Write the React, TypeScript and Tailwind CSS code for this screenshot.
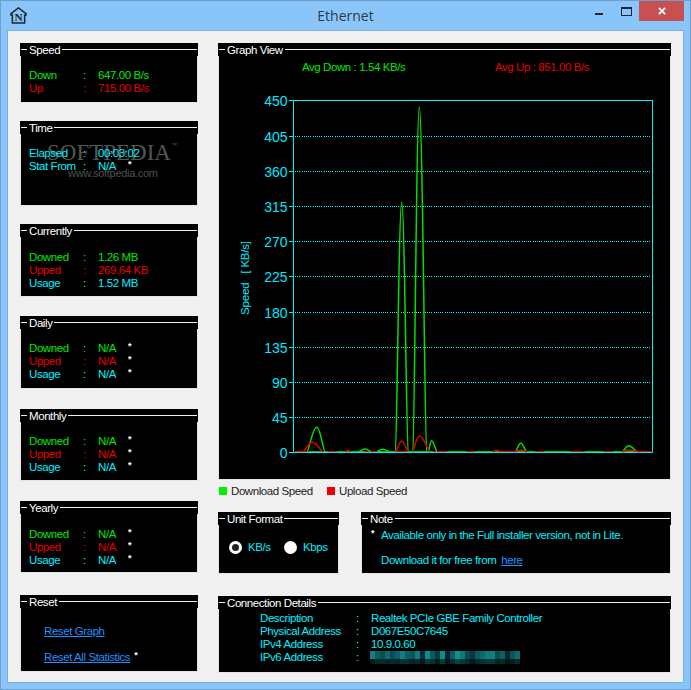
import React from "react";

const G = "text-[#00e800]";
const R = "text-[#e60000]";
const C = "text-[#00f0ff]";

function Panel({ title, className = "", children }: { title: string; className?: string; children?: React.ReactNode }) {
  return (
    <div className={"relative flex flex-col bg-black border-x border-b border-[#e4e4e4] " + className}>
      <div className="-mx-px flex h-[13px] shrink-0 items-center bg-black px-px text-white">
        <span className="h-px w-[6px] bg-[#f0f0f0]" />
        <span className="mt-[2px] px-[2px] leading-[13px]">{title}</span>
        <span className="h-px flex-1 bg-[#f0f0f0]" />
      </div>
      {children}
    </div>
  );
}

function Star() {
  return <span className="mb-[4px] ml-[12px] text-[9px] font-bold leading-[9px] text-white">*</span>;
}

function Row({ label, value, color, star }: { label: string; value: string; color: string; star?: boolean }) {
  return (
    <div className={"flex h-[13px] items-center leading-[13px] " + color}>
      <span className="w-[54px]">{label}</span>
      <span className="w-[15px]">:</span>
      <span>{value}</span>
      {star && <Star />}
    </div>
  );
}

function Stat({ title, className, pad = "pt-[13px]", rows }: { title: string; className: string; pad?: string; rows: [string, string, string, boolean?][] }) {
  return (
    <Panel title={title} className={className}>
      <div className={"relative z-10 pl-[8px] " + pad}>
        {rows.map((r) => (
          <Row key={r[0]} label={r[0]} value={r[1]} color={r[2]} star={r[3]} />
        ))}
      </div>
    </Panel>
  );
}

const BASE = 451.5;
function bump(x0: number, xp: number, x1: number, y: number) {
  const a = xp - x0;
  const b = x1 - xp;
  return `M${x0} ${BASE}C${x0 + a * 0.2} ${BASE} ${xp - a * 0.44} ${y} ${xp} ${y}C${xp + b * 0.44} ${y} ${x1 - b * 0.2} ${BASE} ${x1} ${BASE}`;
}

const greenBumps: [number, number, number, number][] = [
  [307, 316.7, 325, 427.3],
  [359, 365, 371, 449],
  [377, 383, 389, 449.3],
  [395.5, 401.7, 408, 202],
  [413, 419.3, 426.5, 107],
  [428.5, 431.3, 437, 440.7],
  [515.5, 520.7, 526.5, 443.3],
  [622.5, 628.7, 637, 445.7],
];
const redBumps: [number, number, number, number][] = [
  [303, 312.3, 323, 442.3],
  [395.5, 401.7, 408, 441],
  [412.5, 419.3, 430, 436],
  [514, 520.5, 527, 450],
  [622, 629, 640, 450],
  [345, 348, 351, 450.5],
  [493, 497, 501, 450.6],
];

const ticks = [450, 405, 360, 315, 270, 225, 180, 135, 90, 45, 0];
const tickY = [100.5, 136.5, 171.5, 206.5, 241.5, 276.5, 312.5, 347.5, 382.5, 417.5, 452.5];

function Chart() {
  return (
    <svg viewBox="219 90 451 380" className="mt-[17px] h-[380px] w-[451px]" fontFamily="'Liberation Sans', sans-serif">
      <rect x="293.5" y="100.5" width="359" height="352" fill="none" stroke="#00f0f0" strokeWidth="1" shapeRendering="crispEdges" />
      {ticks.map((t, i) => (
        <g key={t}>
          <line x1="289" x2="293" y1={tickY[i]} y2={tickY[i]} stroke="#00f0f0" shapeRendering="crispEdges" />
          {i > 0 && i < 10 && (
            <line x1="295" x2="651" y1={tickY[i]} y2={tickY[i]} stroke="#00ffff" strokeDasharray="1 1.2" shapeRendering="crispEdges" />
          )}
          <text x="287.5" y={tickY[i] + 5} textAnchor="end" fontSize="14" letterSpacing="0" fill="#00e8ff">
            {t}
          </text>
        </g>
      ))}
      <text transform="translate(249 278) rotate(-90)" textAnchor="middle" fontSize="11.5" fill="#00f0ff" letterSpacing="-0.2">
        Speed
        <tspan dx="9">[ KB/s]</tspan>
      </text>
      <line x1="295" x2="651" y1="451.5" y2="451.5" stroke="#00c800" strokeWidth="1.2" />
      <line x1="295" x2="651" y1="451.5" y2="451.5" stroke="#e00000" strokeWidth="1.2" strokeDasharray="14 19 9 27" />
      {greenBumps.map((b) => (
        <path key={b[1]} d={bump(b[0], b[1], b[2], b[3])} fill="none" stroke="#00e000" strokeWidth="1.5" />
      ))}
      {redBumps.map((b) => (
        <path key={b[1]} d={bump(b[0], b[1], b[2], b[3])} fill="none" stroke="#dd0000" strokeWidth="1.5" />
      ))}
    </svg>
  );
}

const mosaicTop = [
  "#0f7f85", "#0c5f58", "#0a4f50", "#0f6a70", "#0b4a55", "#0a6068", "#118085", "#0a5f60", "#0c5555", "#107a80",
  "#052f35", "#0f8a90", "#0b5a55", "#063a40", "#0f8a90", "#04282c", "#0a5a60", "#129090", "#0d7a7a", "#0a4a50",
  "#06383c", "#0b5a6a", "#0d6a6c", "#0f7a78", "#0f8080", "#094f4c", "#0a5f6a", "#042a2e", "#0a5560", "#0c6a70",
];
const mosaicBottom = [
  "#031a1c", "#042c2c", "#062a2e", "#04262a", "#052a2e", "#03282c", "#05302e", "#053030", "#042626", "#042a2e",
  "#021a1c", "#043a3a", "#052e2e", "#021c20", "#053a3a", "#021a1c", "#032c2c", "#064444", "#053838", "#042a2c",
  "#02191c", "#03282c", "#042e30", "#053a38", "#053838", "#032624", "#032a2c", "#01181a", "#02201f", "#042c30",
];

function Mosaic() {
  return (
    <svg viewBox="0 0 150 13" className="-ml-px h-[13px] w-[150px]" shapeRendering="crispEdges">
      {mosaicTop.map((c, i) => (
        <rect key={"t" + i} x={i * 5} y="0" width="5" height="8" fill={c} />
      ))}
      {mosaicBottom.map((c, i) => (
        <rect key={"b" + i} x={i * 5} y="8" width="5" height="5" fill={c} />
      ))}
    </svg>
  );
}

function DetailRow({ label, children }: { label: string; children: React.ReactNode }) {
  return (
    <div className={"flex h-[13px] items-center leading-[13px] " + C}>
      <span className="w-[96px]">{label}</span>
      <span className="w-[15px]">:</span>
      {children}
    </div>
  );
}

export default function App() {
  return (
    <div
      className="flex h-[690px] w-[691px] flex-col border border-[#6b9fd0] bg-[#8ac5fa] text-[11.5px] tracking-[-0.42px]"
      style={{ fontFamily: "'Liberation Sans', Arial, sans-serif" }}
    >
      <div className="relative flex h-[29px] shrink-0 items-start justify-center">
        <svg viewBox="0 0 18 18" className="absolute left-[9px] top-[6px] h-[17px] w-[17px]">
          <path d="M9 1L1 7v1.5h1.5V17h13V8.5H17V7z" fill="none" stroke="#1c2630" strokeWidth="1.6" />
          <text x="9" y="15" textAnchor="middle" fontSize="12" fontWeight="700" fontFamily="'Liberation Serif', serif" fill="#1c2630">
            N
          </text>
        </svg>
        <span className="mt-[5px] text-[14px] leading-[19px] tracking-normal text-[#2a3a4a]" style={{ fontFamily: "'Open Sans', sans-serif" }}>
          Ethernet
        </span>
        <span className="absolute left-[594px] top-[12px] h-[2px] w-[8px] bg-[#1c2630]" />
        <span className="absolute left-[620px] top-[6px] h-[9px] w-[11px] border border-t-2 border-[#1c2630]" />
        <span className="absolute left-[638px] top-0 flex h-[20px] w-[45px] items-center justify-center bg-[#c75050]">
          <svg viewBox="0 0 9 9" className="h-[8px] w-[8px]">
            <path d="M1 1l7 7M8 1L1 8" stroke="#fff" strokeWidth="2" />
          </svg>
        </span>
      </div>

      <div className="mx-[6px] flex h-[653px] gap-[20px] border border-[#7aafe0] bg-[#f0f0f0] pl-[12px] pt-[12px]">
        <div className="flex w-[178px] flex-col">
          <Stat
            title="Speed"
            className="h-[60px]"
            rows={[
              ["Down", "647.00 B/s", G],
              ["Up", "715.00 B/s", R],
            ]}
          />
          <div className="mt-[18px]">
            <Stat
              title="Time"
              className="h-[85px]"
              rows={[
                ["Elapsed", "00:03:02", C],
                ["Stat From", "N/A", C, true],
              ]}
            />
            <div className="relative">
              <div className="absolute left-[27px] top-[-65px] flex flex-col items-start leading-none tracking-normal text-[#555555]">
                <div className="flex items-start">
                  <span className="text-[23px] leading-[24px]" style={{ fontFamily: "'Liberation Serif', serif" }}>
                    SOFTPEDIA
                  </span>
                  <span className="text-[6px] leading-[8px]">™</span>
                </div>
                <span className="ml-[21px] mt-[2px] text-[11px] leading-[13px] tracking-[-0.3px] text-[#505050]">www.softpedia.com</span>
              </div>
            </div>
          </div>
          <Stat
            title="Currently"
            className="mt-[18px] h-[73px]"
            pad="pt-[14px]"
            rows={[
              ["Downed", "1.26 MB", G],
              ["Upped", "269.64 KB", R],
              ["Usage", "1.52 MB", C],
            ]}
          />
          <Stat
            title="Daily"
            className="mt-[19px] h-[73px]"
            rows={[
              ["Downed", "N/A", G, true],
              ["Upped", "N/A", R, true],
              ["Usage", "N/A", C, true],
            ]}
          />
          <Stat
            title="Monthly"
            className="mt-[20px] h-[72px]"
            rows={[
              ["Downed", "N/A", G, true],
              ["Upped", "N/A", R, true],
              ["Usage", "N/A", C, true],
            ]}
          />
          <Stat
            title="Yearly"
            className="mt-[20px] h-[72px]"
            pad="pt-[14px]"
            rows={[
              ["Downed", "N/A", G, true],
              ["Upped", "N/A", R, true],
              ["Usage", "N/A", C, true],
            ]}
          />
          <Panel title="Reset" className="mt-[22px] h-[77px]">
            <div className="flex flex-col gap-[13px] pl-[23px] pt-[17px] leading-[13px]">
              <a className="w-fit text-[#1e90ff] underline">Reset Graph</a>
              <div className="flex items-start">
                <a className="text-[#1e90ff] underline">Reset All Statistics</a>
                <span className="ml-[4px] text-[9px] font-bold leading-[9px] text-white">*</span>
              </div>
            </div>
          </Panel>
        </div>

        <div className="flex w-[453px] flex-col">
          <Panel title="Graph View" className="h-[437px]">
            <div className="flex h-[17px] pl-[83px] pt-[5px] leading-[13px]">
              <span className={"w-[193px] " + G}>Avg Down : 1.54 KB/s</span>
              <span className={R}>Avg Up : 851.00 B/s</span>
            </div>
            <Chart />
          </Panel>

          <div className="mt-[4px] flex h-[14px] items-center leading-[14px] text-[#222]">
            <span className="ml-px h-[8px] w-[8px] bg-[#00f000]" />
            <span className="ml-[4px] w-[92px]">Download Speed</span>
            <span className="ml-[4px] h-[8px] w-[8px] bg-[#f00000]" />
            <span className="ml-[4px]">Upload Speed</span>
          </div>

          <div className="mt-[14px] flex gap-[22px]">
            <Panel title="Unit Format" className="h-[62px] w-[121px]">
              <div className={"flex items-center pl-[10px] pt-[16px] leading-[13px] " + C}>
                <span className="flex h-[13px] w-[13px] items-center justify-center rounded-full bg-white">
                  <span className="h-[7px] w-[7px] rounded-full bg-[#222]" />
                </span>
                <span className="ml-[6px] w-[36px]">KB/s</span>
                <span className="h-[13px] w-[13px] rounded-full bg-white" />
                <span className="ml-[6px]">Kbps</span>
              </div>
            </Panel>
            <Panel title="Note" className="h-[62px] w-[310px]">
              <div className={"pl-[19px] pt-[4px] leading-[13px] " + C}>
                <div className="relative">
                  <span className="absolute left-[-10px] top-[-2px] text-[9px] font-bold text-white">*</span>
                  Available only in the Full installer version, not in Lite.
                </div>
                <div className="mt-[12px]">
                  Download it for free from <a className="ml-[2px] text-[#1e90ff] underline">here</a>
                </div>
              </div>
            </Panel>
          </div>

          <Panel title="Connection Details" className="mt-[22px] h-[77px]">
            <div className="pl-[41px] pt-[3px]">
              <DetailRow label="Description">
                <span>Realtek PCIe GBE Family Controller</span>
              </DetailRow>
              <DetailRow label="Physical Address">
                <span>D067E50C7645</span>
              </DetailRow>
              <DetailRow label="IPv4 Address">
                <span>10.9.0.60</span>
              </DetailRow>
              <DetailRow label="IPv6 Address">
                <Mosaic />
              </DetailRow>
            </div>
          </Panel>
        </div>
      </div>
    </div>
  );
}
